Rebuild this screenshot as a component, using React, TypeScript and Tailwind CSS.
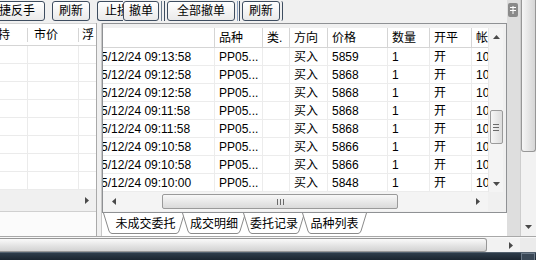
import type { ReactNode } from "react";

const font = "font-['Liberation_Sans','Noto_Sans_CJK_SC',sans-serif]";

type Dir = "up" | "down" | "left" | "right";

function Arrow({ dir }: { dir: Dir }) {
	const vertical = dir === "up" || dir === "down";
	const w = vertical ? 7 : 4;
	const h = vertical ? 4 : 7;
	const points = {
		up: "0,4 3.5,0 7,4",
		down: "0,0 7,0 3.5,4",
		left: "4,0 4,7 0,3.5",
		right: "0,0 4,3.5 0,7",
	}[dir];
	return (
		<svg width={w} height={h} viewBox={`0 0 ${w} ${h}`}>
			<polygon points={points} fill="#4a4a4a" />
		</svg>
	);
}

function Btn({ children, className = "" }: { children: ReactNode; className?: string }) {
	return (
		<div
			className={`flex h-[20px] shrink-0 items-center overflow-hidden whitespace-nowrap rounded-[3px] border border-[#3e4d60] bg-gradient-to-b from-white to-[#eaeaea] text-[12px] leading-none text-black ${className}`}
		>
			{children}
		</div>
	);
}

function Toolbar() {
	return (
		<div className="flex h-[23px] items-start pt-[1px]">
			<Btn className="-ml-[11px] w-[56px] justify-center">捷反手</Btn>
			<Btn className="ml-[7px] w-[38px] justify-center">刷新</Btn>
			<Btn className="ml-[7px] w-[26px] justify-start rounded-r-none border-r-0 pl-[7px]">止损</Btn>
			<Btn className="w-[36px] justify-center">撤单</Btn>
			<div className="mx-[2px] flex h-[20px] gap-[2px]">
				<div className="w-px bg-[#6a7a8c]" />
				<div className="w-px bg-[#3e4d60]" />
			</div>
			<Btn className="w-[68px] justify-center">全部撤单</Btn>
			<div className="mx-[2px] flex h-[20px] gap-[1px]">
				<div className="w-px bg-[#8aa0c0]" />
				<div className="w-px bg-[#3e4d60]" />
			</div>
			<Btn className="w-[38px] justify-center">刷新</Btn>
			<div className="ml-[1px] h-[20px] w-[2px] rounded-r-[2px] border-r border-[#3e4d60]" />
		</div>
	);
}

function LeftPanel() {
	return (
		<div className="flex w-[97px] shrink-0 flex-col border-r border-[#a9a9a9]">
			<div className="flex h-[23px] items-center border-y border-[#d5d5d5] bg-white text-[12px] text-black">
				<div className="flex h-[14px] w-[28px] items-center overflow-hidden border-r border-[#d5d5d5]">
					<span className="-ml-[2px] whitespace-nowrap">持</span>
				</div>
				<div className="flex h-[14px] w-[51px] items-center border-r border-[#d5d5d5] pl-[6px]">市价</div>
				<div className="flex h-full flex-1 items-center overflow-hidden pl-[3px]">
					<span className="whitespace-nowrap">浮</span>
				</div>
			</div>
			<div className="flex flex-col bg-white">
				{Array.from({ length: 8 }, (_, i) => (
					<div key={`lr-${i}`} className="flex h-[18px] border-b border-[#ebebeb]">
						<div className="w-[28px] border-r border-[#ebebeb]" />
						<div className="w-[51px] border-r border-[#ebebeb]" />
						<div className="flex-1" />
					</div>
				))}
			</div>
			<div className="flex h-[21px] items-center justify-end bg-[#f0f0f0] pr-[7px]">
				<Arrow dir="right" />
			</div>
			<div className="h-[1px] bg-[#d0d0d0]" />
			<div className="flex-1 bg-[#fbfbfb]" />
		</div>
	);
}

const cols = [
	{ w: 112, label: "" },
	{ w: 48, label: "品种" },
	{ w: 27, label: "类." },
	{ w: 38, label: "方向" },
	{ w: 60, label: "价格" },
	{ w: 42, label: "数量" },
	{ w: 42, label: "开平" },
	{ w: 16, label: "帐号" },
];

const rows = [
	["09:13:58", "5859"],
	["09:12:58", "5868"],
	["09:12:58", "5868"],
	["09:11:58", "5868"],
	["09:11:58", "5868"],
	["09:10:58", "5866"],
	["09:10:58", "5866"],
	["09:10:00", "5848"],
];

function VScroll() {
	return (
		<div className="flex w-[15px] flex-col items-center border-l border-[#e8e8e8] bg-[#f4f4f4]">
			<div className="flex h-[18px] items-center">
				<Arrow dir="up" />
			</div>
			<div className="h-[64px]" />
			<div className="flex h-[34px] w-[13px] flex-col items-center justify-center gap-[2px] rounded-[2px] border border-[#9a9a9a] bg-gradient-to-r from-[#f6f6f6] to-[#dcdcdc]">
				<div className="h-px w-[6px] bg-[#6a6a6a]" />
				<div className="h-px w-[6px] bg-[#6a6a6a]" />
				<div className="h-px w-[6px] bg-[#6a6a6a]" />
			</div>
			<div className="flex-1" />
			<div className="flex h-[16px] items-center">
				<Arrow dir="down" />
			</div>
		</div>
	);
}

function RightTable() {
	return (
		<div className="flex h-[190px] flex-col border border-[#8f9194] pt-[4px] pr-[3px]">
			<div className="flex h-[164px]">
				<div className="flex w-[385px] flex-col overflow-hidden bg-white">
					<div className="flex h-[20px] border-b border-[#d5d5d5] text-[12px] text-black">
						{cols.map((c, i) => (
							<div
								key={`h-${i}`}
								style={{ width: c.w }}
								className={`flex shrink-0 items-center overflow-hidden whitespace-nowrap pl-[4px] ${i < cols.length - 1 ? "border-r border-[#d5d5d5]" : ""}`}
							>
								{c.label}
							</div>
						))}
					</div>
					{rows.map(([time, price], r) => {
						const cells = [`2025/12/24 ${time}`, "PP05...", "", "买入", price, "1", "开", "10000"];
						return (
							<div key={`r-${r}`} className="flex h-[18px] border-b border-[#ececec] text-[12px] text-black">
								{cells.map((t, i) => (
									<div
										key={`c-${r}-${i}`}
										style={{ width: cols[i].w }}
										className={`flex shrink-0 items-center overflow-hidden whitespace-nowrap ${i === 0 ? "" : "pl-[4px]"} ${i < cols.length - 1 ? "border-r border-[#ececec]" : ""}`}
									>
										{i === 0 ? <span className="-ml-[22px]">{t}</span> : t}
									</div>
								))}
							</div>
						);
					})}
				</div>
				<VScroll />
			</div>
			<div className="flex h-[19px]">
				<div className="flex w-[385px] items-center bg-[#f4f4f4]">
					<div className="flex w-[20px] justify-center pl-[2px]">
						<Arrow dir="left" />
					</div>
					<div className="w-[39px]" />
					<div className="flex h-[15px] w-[236px] items-center justify-center gap-[2px] rounded-[2px] border border-[#9a9a9a] bg-gradient-to-b from-[#f8f8f8] to-[#dadada]">
						<div className="h-[6px] w-px bg-[#6a6a6a]" />
						<div className="h-[6px] w-px bg-[#6a6a6a]" />
						<div className="h-[6px] w-px bg-[#6a6a6a]" />
					</div>
					<div className="flex flex-1 justify-end pr-[8px]">
						<Arrow dir="right" />
					</div>
				</div>
				<div className="w-[15px] bg-[#f0f0f0]" />
			</div>
		</div>
	);
}

const tabs = [
	{ label: "未成交委托", w: 82 },
	{ label: "成交明细", w: 64 },
	{ label: "委托记录", w: 62 },
	{ label: "品种列表", w: 65 },
];

function Tabs() {
	return (
		<div className="flex h-[23px] items-start bg-white pl-px">
			{tabs.map((t, i) => (
				<div
					key={t.label}
					style={{ width: t.w }}
					className={`relative flex h-[21px] shrink-0 items-center justify-center text-[12px] text-black ${i > 0 ? "-ml-[3px]" : "pl-[3px]"}`}
				>
					<svg className="absolute inset-0" width={t.w} height={21} viewBox={`0 0 ${t.w} 21`}>
						<path
							d={`M0.5,0 L6,18 Q7,20.5 9,20.5 L${t.w - 9},20.5 Q${t.w - 7},20.5 ${t.w - 6},18 L${t.w - 0.5},0`}
							fill="white"
							stroke="#8a8a8a"
							strokeWidth="1"
						/>
					</svg>
					<span className="relative">{t.label}</span>
				</div>
			))}
		</div>
	);
}

export default function App() {
	return (
		<div className={`flex h-[260px] w-[536px] flex-col overflow-hidden bg-[#f0f0f0] ${font}`}>
			<div className="flex h-[236px]">
				<div className="flex w-[507px] flex-col">
					<Toolbar />
					<div className="flex flex-1">
						<LeftPanel />
						<div className="w-[5px] border-r border-[#c8c8c8]" />
						<div className="flex flex-1 flex-col">
							<RightTable />
							<Tabs />
						</div>
					</div>
				</div>
				<div className="w-[13px] bg-[#dedede] pt-[3px] pl-px">
					<div className="flex h-[14px] w-[10px] items-center justify-center rounded-[2px] bg-[#8a8a8a]">
						<svg width="6" height="8" viewBox="0 0 6 8">
							<path d="M0,1.5 H6 M0,4.5 H6 M3,0 V8" stroke="white" strokeWidth="1" />
						</svg>
					</div>
				</div>
				<div className="flex w-[16px] flex-col border-l border-[#cdcdcd] bg-[#f2f2f2]">
					<div className="h-[152px] w-[15px] rounded-b-[3px] border border-t-0 border-[#979797] bg-gradient-to-r from-[#f6f6f6] to-[#d6d6d6]" />
					<div className="flex-1" />
					<div className="flex h-[16px] items-center justify-center pb-[2px]">
						<Arrow dir="down" />
					</div>
				</div>
			</div>
			<div className="h-[2px] border-t border-[#a8a8a8] bg-[#f8f8f8]" />
			<div className="flex h-[14px]">
				<div className="h-[14px] w-[487px] rounded-r-[3px] border border-l-0 border-[#979797] bg-gradient-to-b from-[#fafafa] to-[#d2d2d2]" />
				<div className="flex w-[33px] items-center justify-end bg-[#f2f2f2] pr-[7px]">
					<Arrow dir="right" />
				</div>
				<div className="w-[16px] bg-[#ebebeb]" />
			</div>
			<div className="flex h-[8px] border-t border-[#52606e] bg-gradient-to-b from-[#2e3c4a] to-[#1b2530]">
				<div className="flex-1" />
				<div className="mr-px w-[14px] border-x border-t border-[#6b7988] bg-[#3a4856]" />
			</div>
		</div>
	);
}
